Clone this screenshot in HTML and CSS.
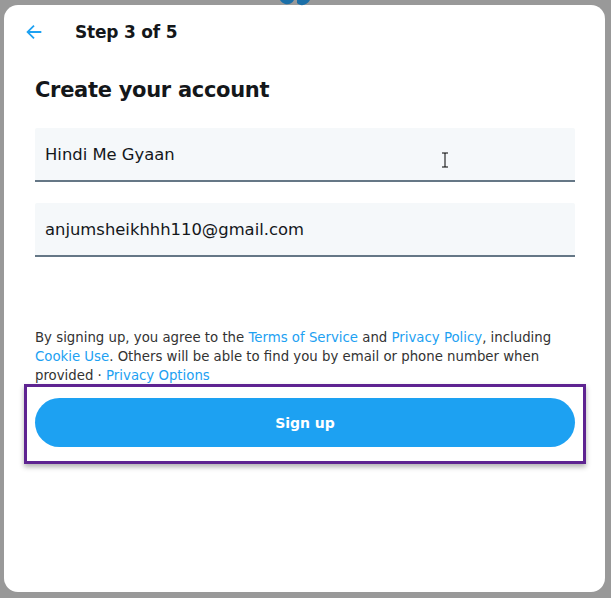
FILE: index.html
```html
<!DOCTYPE html>
<html lang="en">
<head>
    <meta charset="UTF-8">
    <meta name="viewport" content="width=device-width, initial-scale=1.0">
    <title>Create your account</title>
    <link rel="stylesheet" href="styles.css">
</head>
<body>
    <svg class="logo" viewBox="0 0 36 6" width="36" height="6">
        <path d="M0 0h14c-2 4-6 5-9 4C3 3 1 2 0 0z" fill="#1b6fa8"/>
        <path d="M17 0h13c-3 5-9 7-13 3z" fill="#1b6fa8"/>
    </svg>
    <div class="modal">
        <div class="header">
            <svg class="back" viewBox="0 0 24 24" width="22" height="22">
                <path d="M20 11H7.4l5.3-5.3-1.4-1.4L3.6 12l7.7 7.7 1.4-1.4L7.4 13H20z" fill="#1da1f2"/>
            </svg>
            <span class="step">Step 3 of 5</span>
        </div>
        <h1>Create your account</h1>
        <div class="field">Hindi Me Gyaan
            <svg class="ibeam" viewBox="0 0 8 16" width="8" height="16">
                <path d="M1 1h6M4 1v14M1 15h6" stroke="#000" stroke-width="1" fill="none"/>
            </svg>
        </div>
        <div class="field">anjumsheikhhh110@gmail.com</div>
        <p class="terms">By signing up, you agree to the <a href="#">Terms of Service</a> and <a href="#">Privacy Policy</a>, including <a href="#">Cookie Use</a>. Others will be able to find you by email or phone number when provided · <a href="#">Privacy Options</a></p>
        <div class="highlight">
            <button>Sign up</button>
        </div>
    </div>
</body>
</html>
```
FILE: styles.css
```css
body {
    margin: 0;
    padding: 5px 6px 6px 4px;
    background: #999;
    font-family: 'DejaVu Sans', sans-serif;
    color: #14171a;
    height: 598px;
    box-sizing: border-box;
    overflow: hidden;
    position: relative;
}
.logo {
    position: absolute;
    top: 0;
    left: 280px;
}
.modal {
    background: #fff;
    border-radius: 14px;
    height: 587px;
    padding: 0 30px 0 31px;
    box-sizing: border-box;
}
.header {
    display: flex;
    align-items: center;
    height: 51px;
    padding-top: 1px;
    margin-left: -12px;
}
.back {
    margin-right: 30px;
}
.step {
    font-size: 17px;
    font-weight: bold;
    letter-spacing: -0.2px;
}
h1 {
    font-size: 21px;
    font-weight: bold;
    margin: 21px 0 26px;
    letter-spacing: -0.3px;
}
.field {
    position: relative;
    background: #f5f8fa;
    border-bottom: 2px solid #657786;
    border-radius: 2px 2px 0 0;
    height: 52px;
    line-height: 54px;
    padding-left: 10px;
    font-size: 16.4px;
    margin-bottom: 21px;
    color: #14171a;
}
.ibeam {
    position: absolute;
    left: 406px;
    top: 24px;
}
.terms {
    margin: 71px 0 0;
    font-size: 13.3px;
    line-height: 19px;
    color: #333;
}
.terms a {
    color: #1da1f2;
    text-decoration: none;
}
.highlight {
    margin: -1px -11px 0 -11px;
    border: 3px solid #5e2491;
    padding: 11px 8px 14px;
    box-shadow: 0 3px 5px rgba(0,0,0,0.3);
}
button {
    display: block;
    width: 100%;
    height: 49px;
    background: #1da1f2;
    color: #fff;
    border: none;
    border-radius: 25px;
    font-family: 'DejaVu Sans', sans-serif;
    font-size: 14px;
    font-weight: bold;
}
```
